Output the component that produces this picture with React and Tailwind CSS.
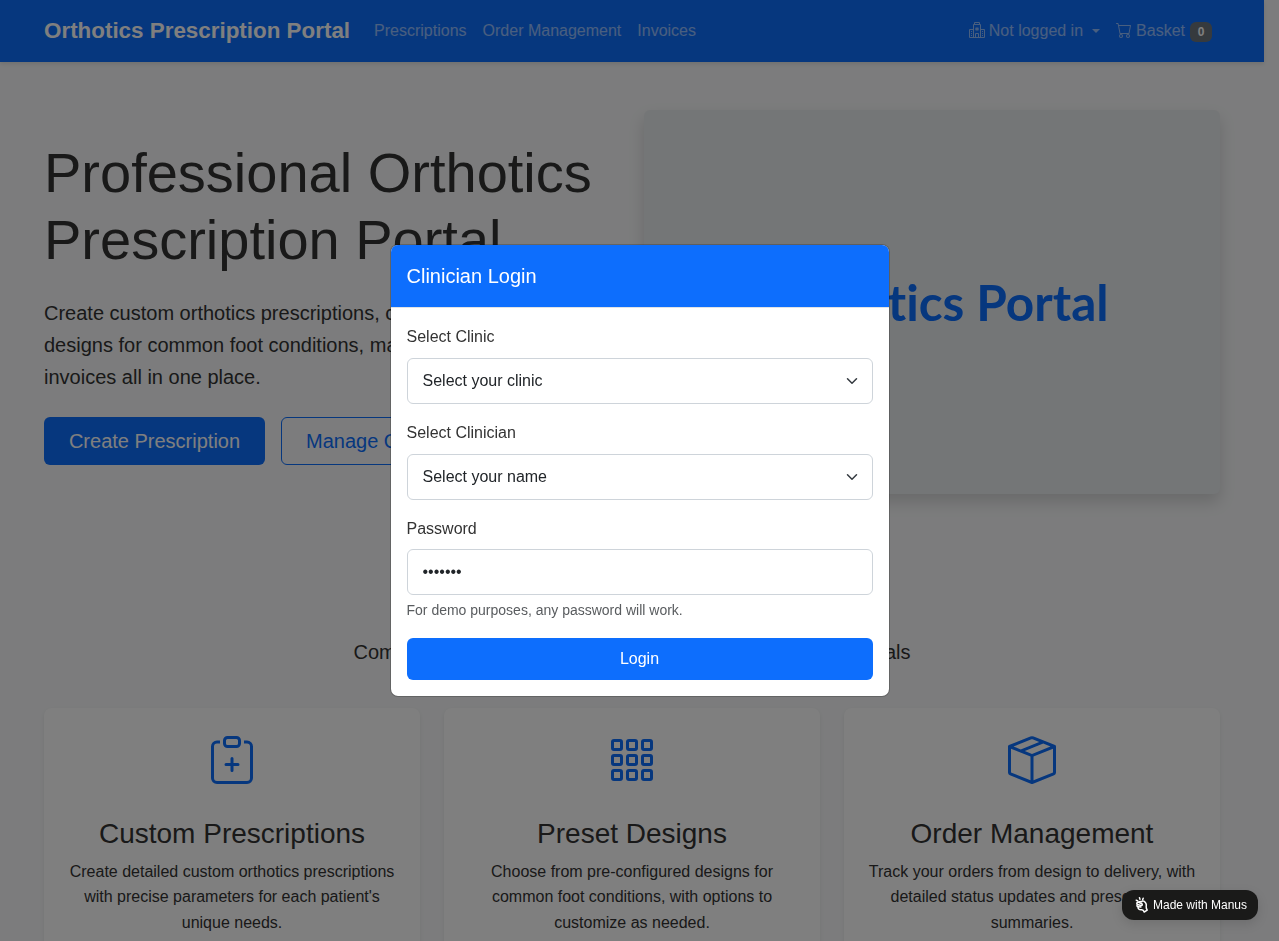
import { BsHospital, BsCart, BsClipboardPlus, BsGrid3X3Gap, BsBoxSeam } from "react-icons/bs";

const cards = [
  { Icon: BsClipboardPlus, title: "Custom Prescriptions", text: "Create detailed custom orthotics prescriptions with precise parameters for each patient's unique needs." },
  { Icon: BsGrid3X3Gap, title: "Preset Designs", text: "Choose from pre-configured designs for common foot conditions, with options to customize as needed." },
  { Icon: BsBoxSeam, title: "Order Management", text: "Track your orders from design to delivery, with detailed status updates and prescription summaries." },
];

function Navbar() {
  return (
    <header className="h-[62px] bg-[#0d6efd] shadow-[0_2px_4px_rgba(0,0,0,0.1)]">
      <nav className="mx-auto flex h-full w-[1200px] items-center px-3 text-white/55">
        <span className="mr-6 text-[22.4px] font-bold text-white">Orthotics Prescription Portal</span>
        <div className="flex gap-4 whitespace-nowrap">
          <a>Prescriptions</a>
          <a>Order Management</a>
          <a>Invoices</a>
        </div>
        <div className="mr-2 ml-auto flex items-center gap-4 whitespace-nowrap">
          <a className="flex items-center">
            <BsHospital className="mr-1 mb-0.5 size-4" />
            Not logged in
            <span className="ml-[9px] border-x-4 border-t-4 border-x-transparent border-t-current" />
          </a>
          <a className="flex items-center">
            <BsCart className="mr-1 mb-0.5 size-4" />
            Basket
            <span className="mt-0.5 ml-[5px] flex h-5 w-[22px] items-center justify-center rounded-md bg-[#6c757d] text-xs font-bold text-white">0</span>
          </a>
        </div>
      </nav>
    </header>
  );
}

function Hero() {
  return (
    <section className="mx-auto grid w-[1200px] grid-cols-2 items-center gap-6 px-3 pt-12">
      <div>
        <h1 className="mb-6 text-[56px] leading-[67.2px]">Professional Orthotics Prescription Portal</h1>
        <p className="mb-6 text-xl leading-8">
          Create custom orthotics prescriptions, choose from preset designs for common foot conditions, manage orders, and track invoices all in one place.
        </p>
        <div className="flex gap-4 text-xl">
          <button className="h-12 w-[221px] rounded-md bg-[#0d6efd] text-white">Create Prescription</button>
          <button className="h-12 rounded-md border border-[#0d6efd] px-6 text-[#0d6efd]">Manage Orders</button>
        </div>
      </div>
      <div className="flex h-96 items-center justify-center rounded-md bg-[#e9ecef] pt-px shadow-[0_8px_16px_rgba(0,0,0,0.15)]">
        <span className="font-['Lato',sans-serif] text-[49.5px] leading-none font-bold text-[#0d6efd] [font-variant-ligatures:none]">Orthotics Portal</span>
      </div>
    </section>
  );
}

function Features() {
  return (
    <section className="mx-auto w-[1200px] px-3 pt-24">
      <h2 className="mb-2 text-center text-[32px] leading-[38px]">Our Services</h2>
      <p className="mb-10 text-center text-xl leading-8">Comprehensive orthotics solutions for healthcare professionals</p>
      <div className="grid grid-cols-3 gap-6">
        {cards.map(({ Icon, title, text }) => (
          <article key={title} className="flex h-[280px] flex-col items-center rounded-lg bg-white px-6 pt-7 text-center shadow-[0_2px_4px_rgba(0,0,0,0.075)]">
            <Icon className="size-12 shrink-0 text-[#0d6efd]" />
            <h3 className="mt-[33px] mb-2 text-[28px] leading-[33.6px]">{title}</h3>
            <p className="leading-[25.6px]">{text}</p>
          </article>
        ))}
      </div>
    </section>
  );
}

function SelectField({ label, value }) {
  return (
    <div className="mb-4">
      <label className="mb-2 block leading-[25.6px]">{label}</label>
      <div className="flex h-[46px] items-center justify-between rounded-md border border-[#ced4da] pr-3 pl-[15px] text-[#212529]">
        {value}
        <svg className="h-3 w-4" viewBox="0 0 16 16" fill="none" stroke="#343a40" strokeWidth="2" strokeLinecap="round" strokeLinejoin="round">
          <path d="m2 5 6 6 6-6" />
        </svg>
      </div>
    </div>
  );
}

function LoginModal() {
  return (
    <div className="fixed inset-0 flex items-center justify-center bg-black/50">
      <form className="w-[500px] overflow-hidden rounded-lg border border-black/20 bg-white bg-clip-padding">
        <h5 className="border-b border-[#dee2e6] bg-[#0d6efd] px-4 py-4 text-xl leading-[30px] text-white">Clinician Login</h5>
        <div className="p-4">
          <SelectField label="Select Clinic" value="Select your clinic" />
          <SelectField label="Select Clinician" value="Select your name" />
          <label className="mb-2 block leading-[25.6px]">Password</label>
          <input type="password" defaultValue="demo123" className="block h-[46px] w-full rounded-md border border-[#ced4da] px-[15px] text-[#212529]" />
          <div className="mt-1 mb-4 text-sm leading-[22.4px] text-[#595c5f]">For demo purposes, any password will work.</div>
          <button type="button" className="h-[42px] w-full rounded-md bg-[#0d6efd] text-white">Login</button>
        </div>
      </form>
    </div>
  );
}

function ManusBadge() {
  return (
    <div className="fixed right-[21px] bottom-[21px] flex h-[30px] w-[136px] items-center rounded-xl bg-[#1a1a19] pl-3 text-xs whitespace-nowrap text-white shadow-[0_4px_12px_rgba(0,0,0,0.12)]">
      <svg className="mr-0.5 h-[18px] w-[17px] shrink-0" viewBox="0 0 17 18" fill="none" stroke="currentColor" strokeWidth="1.5" strokeLinecap="round" strokeLinejoin="round">
        <path d="M2.200 4.200 3.700 5M5.500 1.700l.5 1.500M9.200 2.200l-.5 1.300" />
        <path d="M4.500 6.300c-1.800-.2-2.300 1.500-1 2.200-1 .8-.5 2.200.7 2.300-.6 1.700.7 3.200 3.600 2.900 1.200 0 1.900.8 2.400 2.300l3-1.800c-.8-1.500-1.200-2.300-1-3.700.5-2.200-.7-4.200-2.400-5.300-1-.6-2-.3-2 .6-1.200-.6-2.500-.4-3.300.5Z" />
        <path d="m4.500 6.300 3 1.200c1.400.6.8 2.200-.4 1.900L3.500 8.500M4.200 10.800l2.600.3" />
      </svg>
      Made with Manus
    </div>
  );
}

export default function App() {
  return (
    <div className="h-[941px] overflow-hidden bg-[#f8f9fa] pr-[15px] font-['Liberation_Sans',sans-serif] text-base text-[#333333]">
      <Navbar />
      <Hero />
      <Features />
      <LoginModal />
      <ManusBadge />
    </div>
  );
}
